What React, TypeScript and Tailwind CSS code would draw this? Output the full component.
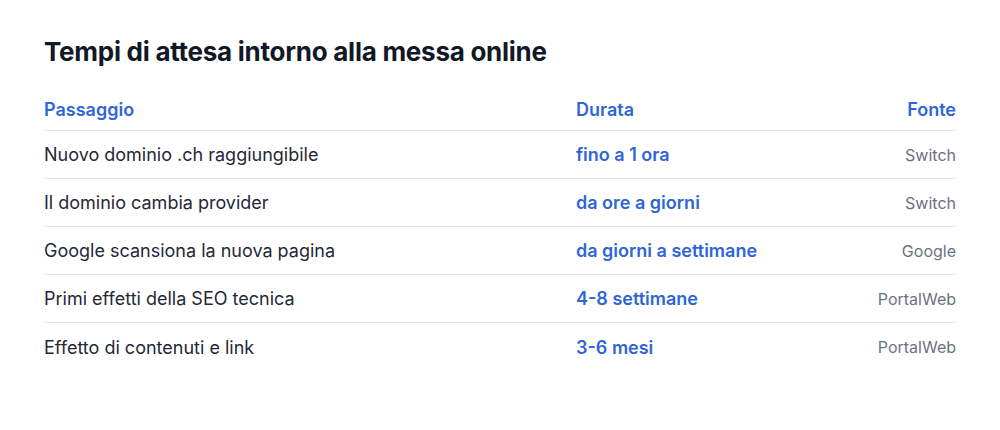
import React from "react";

const rows = [
  ["Nuovo dominio .ch raggiungibile", "fino a 1 ora", "Switch"],
  ["Il dominio cambia provider", "da ore a giorni", "Switch"],
  ["Google scansiona la nuova pagina", "da giorni a settimane", "Google"],
  ["Primi effetti della SEO tecnica", "4-8 settimane", "PortalWeb"],
  ["Effetto di contenuti e link", "3-6 mesi", "PortalWeb"],
];

export default function App() {
  return (
    <div className="w-[1000px] h-[430px] bg-white px-[44px] pt-[36px]" style={{ fontFamily: "Inter, 'Noto Sans', sans-serif" }}>
      <h2 className="text-[26px] leading-[32px] font-bold text-[#111827] tracking-[-0.01em]">
        Tempi di attesa intorno alla messa online
      </h2>
      <div className="mt-[21px]">
        <div className="grid grid-cols-[532px_1fr_auto] items-center h-[42px] border-b border-[#e5e7eb] text-[18px] font-semibold text-[#2f66d6]">
          <div>Passaggio</div>
          <div>Durata</div>
          <div className="text-right">Fonte</div>
        </div>
        {rows.map((r, i) => (
          <div
            key={i}
            className={`grid grid-cols-[532px_1fr_auto] items-center h-[48px] ${i < rows.length - 1 ? "border-b border-[#e5e7eb]" : ""}`}
          >
            <div className="text-[18px] text-[#1f2937]">{r[0]}</div>
            <div className="text-[18px] font-semibold text-[#2f66d6]">{r[1]}</div>
            <div className="text-[16px] text-[#6b7280] text-right">{r[2]}</div>
          </div>
        ))}
      </div>
    </div>
  );
}
